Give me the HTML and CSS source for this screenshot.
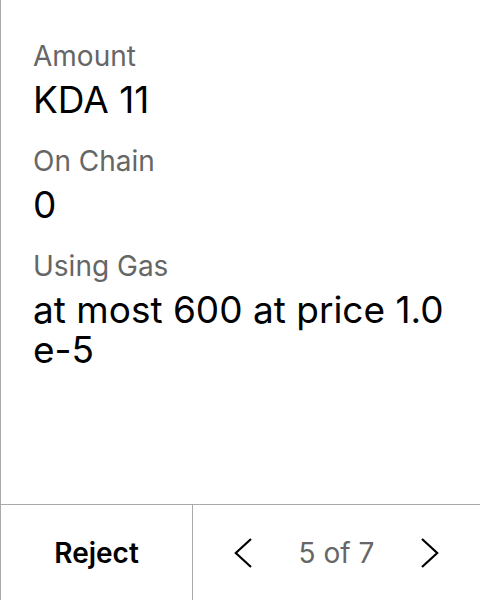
FILE: index.html
```html
<!DOCTYPE html>
<html>
<head>
<meta charset="utf-8">
<link rel="stylesheet" href="styles.css">
</head>
<body>
<div class="panel">
  <div class="content">
    <div class="field">
      <div class="label">Amount</div>
      <div class="value">KDA 11</div>
    </div>
    <div class="field">
      <div class="label">On Chain</div>
      <div class="value">0</div>
    </div>
    <div class="field">
      <div class="label">Using Gas</div>
      <div class="value">at most 600 at price 1.0e-5</div>
    </div>
  </div>
  <div class="footer">
    <div class="reject">Reject</div>
    <div class="pager">
      <svg class="chev" width="18" height="30" viewBox="0 0 18 30"><path d="M17 1 L1.8 15 L17 29" fill="none" stroke="#000" stroke-width="2.2"/></svg>
      <span class="count">5 of 7</span>
      <svg class="chev" width="18" height="30" viewBox="0 0 18 30"><path d="M1 1 L16.2 15 L1 29" fill="none" stroke="#000" stroke-width="2.2"/></svg>
    </div>
  </div>
</div>
</body>
</html>
```
FILE: styles.css
```css
html, body {
  margin: 0;
  padding: 0;
  background: #fff;
}
body {
  font-family: Inter, "Noto Sans", sans-serif;
  color: #000;
}
.panel {
  width: 480px;
  height: 600px;
  box-sizing: border-box;
  border-left: 1px solid #aaa;
  display: flex;
  flex-direction: column;
}
.content {
  flex: 1;
  padding: 39px 32px 0 32px;
  display: flex;
  flex-direction: column;
  gap: 24px;
}
.label {
  font-size: 28px;
  line-height: 34px;
  color: #666;
}
.value {
  font-size: 37px;
  line-height: 40px;
  margin-top: 7px;
  word-break: break-all;
}
.footer {
  height: 95px;
  border-top: 1px solid #aaa;
  display: flex;
}
.reject {
  width: 191px;
  border-right: 1px solid #aaa;
  display: flex;
  align-items: center;
  justify-content: center;
  font-size: 28px;
  font-weight: 600;
}
.pager {
  flex: 1;
  display: flex;
  align-items: center;
  justify-content: center;
  gap: 47px;
}
.count {
  font-size: 28px;
  color: #666;
}
.chev {
  display: block;
}
```
